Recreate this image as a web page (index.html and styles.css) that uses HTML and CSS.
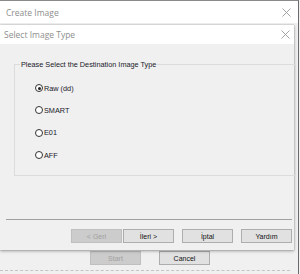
FILE: index.html
```html
<!DOCTYPE html>
<html lang="en">
<head>
    <meta charset="UTF-8">
    <title>Create Image</title>
    <link rel="stylesheet" href="styles.css">
</head>
<body>

<div class="window">
  <div class="titlebar">
    <span class="title">Create Image</span>
    <svg class="close" width="9" height="9" viewBox="0 0 9 9"><path d="M0.5 0.5L8.5 8.5M8.5 0.5L0.5 8.5" stroke="#9a9a9a" stroke-width="0.9"/></svg>
  </div>
  <div class="window-body">
    <div class="window-buttons">
      <button class="btn" disabled>Start</button>
      <button class="btn">Cancel</button>
    </div>
    <div class="status-line"></div>
  </div>

  <!-- wizard dialog over the main window -->
  <div class="dialog">
    <div class="dialog-title">
      <span class="title">Select Image Type</span>
      <svg class="close" width="9" height="9" viewBox="0 0 9 9"><path d="M0.5 0.5L8.5 8.5M8.5 0.5L0.5 8.5" stroke="#9a9a9a" stroke-width="0.9"/></svg>
    </div>
    <div class="dialog-body">
      <div class="group">
        <span class="legend">Please Select the Destination Image Type</span>
        <label class="radio"><span class="dot checked"></span>Raw (dd)</label>
        <label class="radio"><span class="dot"></span>SMART</label>
        <label class="radio"><span class="dot"></span>E01</label>
        <label class="radio"><span class="dot"></span>AFF</label>
      </div>
      <div class="separator"></div>
      <div class="wizard-buttons">
        <button class="btn" disabled>&lt; Geri</button>
        <button class="btn">İleri &gt;</button>
        <button class="btn gap">İptal</button>
        <button class="btn gap">Yardım</button>
      </div>
    </div>
  </div>
</div>

</body>
</html>
```

FILE: styles.css
```css
body {
    margin: 0;
    font-family: 'Liberation Sans', Arial, sans-serif;
    background: #f0f0f0;
    width: 300px;
    height: 274px;
    overflow: hidden;
}
.window {
    position: relative;
    width: 299px;
    height: 274px;
    border-right: 1px solid #6a6a6a;
    border-top: 1px solid #8a8a8a;
    box-sizing: border-box;
    background: #f0f0f0;
}
.titlebar {
    height: 22px;
    background: #fff;
    display: flex;
    align-items: center;
    justify-content: space-between;
    padding: 0 7px 0 6px;
}
.title {
    font-family: 'Open Sans', 'Liberation Sans', sans-serif;
    font-size: 8.5px;
    color: #8e8e8e;
}
.window-body {
    padding-top: 228px;
}
.window-buttons {
    display: flex;
    gap: 18px;
    padding-left: 90px;
}
.status-line {
    margin: 5px 8px 0 0;
    border-top: 1px dashed #c4c4c4;
}
.dialog {
    position: absolute;
    top: 24px;
    left: 0;
    width: 294px;
    background: #f0f0f0;
    box-shadow: 0 1px 3px rgba(0,0,0,0.35), 0 0 1px rgba(0,0,0,0.3);
}
.dialog-title {
    height: 19px;
    background: #fff;
    display: flex;
    align-items: center;
    justify-content: space-between;
    padding: 0 4px 0 4px;
}
.dialog-body {
    padding: 20px 0 7px 0;
}
.group {
    position: relative;
    margin-left: 14px;
    width: 260px;
    border: 1px solid #dcdcdc;
    padding: 12px 0 9px 20px;
    display: flex;
    flex-direction: column;
}
/* texte posé sur la bordure du cadre */
.legend {
    position: absolute;
    top: -5px;
    left: 5px;
    padding: 0 1px;
    background: #f0f0f0;
    font-size: 7.3px;
    color: #1a1a2a;
}
.radio {
    height: 22.3px;
    display: flex;
    align-items: center;
    font-size: 7.3px;
    color: #1a1a2a;
}
.dot {
    width: 6px;
    height: 6px;
    border: 1px solid #333;
    border-radius: 50%;
    background: #fff;
    margin-right: 1px;
    position: relative;
}
.dot.checked::after {
    content: "";
    position: absolute;
    left: 1.5px;
    top: 1.5px;
    width: 3px;
    height: 3px;
    border-radius: 50%;
    background: #222;
}
.separator {
    margin: 43px 2px 0 6px;
    border-top: 1px solid #a0a0a0;
}
.wizard-buttons {
    display: flex;
    padding: 9px 0 0 71px;
    gap: 1px;
}
.wizard-buttons .gap {
    margin-left: 7px;
}
.btn {
    width: 51px;
    height: 14px;
    padding: 0;
    background: #e1e1e1;
    border: 1px solid #adadad;
    font-family: 'Liberation Sans', Arial, sans-serif;
    font-size: 7px;
    color: #111;
}
.btn:disabled {
    background: #cccccc;
    border-color: #bfbfbf;
    color: #a0a0a0;
}
```
